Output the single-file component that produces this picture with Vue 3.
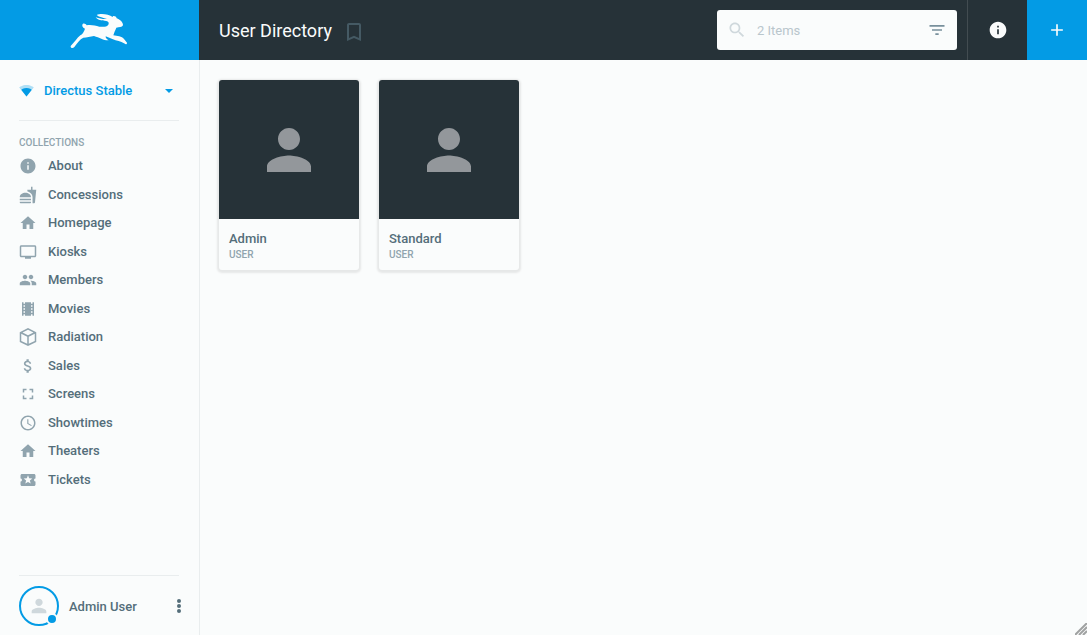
<script setup>
const paths = {
  info: 'M12 2C6.48 2 2 6.48 2 12s4.48 10 10 10 10-4.48 10-10S17.52 2 12 2zm1 15h-2v-6h2v6zm0-8h-2V7h2v2z',
  food: 'M18.06 22.99h1.66c.84 0 1.53-.64 1.63-1.46L23 5.05h-5V1h-1.97v4.05h-4.97l.3 2.34c1.71.47 3.31 1.32 4.27 2.26 1.44 1.42 2.43 2.89 2.43 5.29v8.05zM1 21.99V21h15.03v.99c0 .55-.45 1-1.01 1H2.01c-.56 0-1.01-.45-1.01-1zm15.03-7c0-8-15.03-8-15.03 0h15.03zM1.02 17h15v2h-15z',
  home: 'M10 20v-6h4v6h5v-8h3L12 3 2 12h3v8z',
  tv: 'M21 3H3c-1.1 0-2 .9-2 2v12c0 1.1.9 2 2 2h5v2h8v-2h5c1.1 0 1.99-.9 1.99-2L23 5c0-1.1-.9-2-2-2zm0 14H3V5h18v12z',
  people: 'M16 11c1.66 0 2.99-1.34 2.99-3S17.66 5 16 5c-1.66 0-3 1.34-3 3s1.34 3 3 3zm-8 0c1.66 0 2.99-1.34 2.99-3S9.66 5 8 5C6.34 5 5 6.34 5 8s1.34 3 3 3zm0 2c-2.33 0-7 1.17-7 3.5V19h14v-2.5c0-2.33-4.67-3.5-7-3.5zm8 0c-.29 0-.62.02-.97.05 1.16.84 1.97 1.97 1.97 3.45V19h6v-2.5c0-2.33-4.67-3.5-7-3.5z',
  film: 'M18 3v2h-2V3H8v2H6V3H4v18h2v-2h2v2h8v-2h2v2h2V3h-2zM8 17H6v-2h2v2zm0-4H6v-2h2v2zm0-4H6V7h2v2zm10 8h-2v-2h2v2zm0-4h-2v-2h2v2zm0-4h-2V7h2v2z',
  box: 'M12 0L1 5.5v13L12 24l11-5.500v-13L12 0zM12 2.400L19.300 6 12 9.700 4.700 6 12 2.400zM3 7.700L11 11.700V21.100L3 17.200V7.700zM13 21.100V11.700L21 7.700V17.200L13 21.100z',
  money: 'M11.8 10.9c-2.27-.59-3-1.2-3-2.15 0-1.09 1.01-1.85 2.7-1.85 1.78 0 2.44.85 2.5 2.1h2.21c-.07-1.72-1.12-3.3-3.21-3.81V3h-3v2.16c-1.94.42-3.5 1.68-3.5 3.61 0 2.31 1.91 3.46 4.7 4.13 2.5.6 3 1.48 3 2.41 0 .69-.49 1.79-2.7 1.79-2.06 0-2.87-.92-2.98-2.1h-2.2c.12 2.19 1.76 3.42 3.68 3.83V21h3v-2.15c1.95-.37 3.5-1.5 3.5-3.55 0-2.84-2.43-3.81-4.7-4.4z',
  screen: 'M7 14H5v5h5v-2H7v-3zm-2-4h2V7h3V5H5v5zm12 7h-3v2h5v-5h-2v3zM14 5v2h3v3h2V5h-5z',
  clock: 'M11.99 2C6.47 2 2 6.48 2 12s4.47 10 9.99 10C17.52 22 22 17.52 22 12S17.52 2 11.99 2zM12 20c-4.42 0-8-3.58-8-8s3.58-8 8-8 8 3.58 8 8-3.58 8-8 8zm.5-13H11v6l5.25 3.15.75-1.23-4.5-2.67z',
  ticket: 'M20 12c0-1.1.9-2 2-2V6c0-1.1-.9-2-2-2H4c-1.1 0-1.99.9-1.99 2v4c1.1 0 1.99.9 1.99 2s-.89 2-2 2v4c0 1.1.9 2 2 2h16c1.1 0 2-.9 2-2v-4c-1.1 0-2-.9-2-2zm-4.42 4.8L12 14.5l-3.58 2.3 1.08-4.12-3.29-2.69 4.24-.25L12 5.8l1.54 3.95 4.24.25-3.29 2.69 1.09 4.11z',
  person: 'M12 12c2.21 0 4-1.79 4-4s-1.79-4-4-4-4 1.79-4 4 1.79 4 4 4zm0 2c-2.67 0-8 1.34-8 4v2h16v-2c0-2.66-5.33-4-8-4z',
}

const collections = [
  { name: 'About', icon: paths.info },
  { name: 'Concessions', icon: paths.food },
  { name: 'Homepage', icon: paths.home },
  { name: 'Kiosks', icon: paths.tv },
  { name: 'Members', icon: paths.people },
  { name: 'Movies', icon: paths.film },
  { name: 'Radiation', icon: paths.box },
  { name: 'Sales', icon: paths.money },
  { name: 'Screens', icon: paths.screen },
  { name: 'Showtimes', icon: paths.clock },
  { name: 'Theaters', icon: paths.home },
  { name: 'Tickets', icon: paths.ticket },
]

const users = [
  { name: 'Admin', role: 'User' },
  { name: 'Standard', role: 'User' },
]
</script>

<template>
  <div class="app">
    <aside class="sidebar">
      <a class="logo" href="#" aria-label="Directus">
        <svg viewBox="0 0 240 180" width="80" height="60" aria-hidden="true">
          <path d="M67 74C69 68 77 70 80 76C92 73 106 77 118 80C130 81 141 81 145 74C148 68 145 65 139 63C125 63 111 59 107 52C119 56 130 58 141 57C131 53 117 52 110 45C121 40 146 42 158 51C158 46 169 48 170 55C180 58 190 68 189 76C186 82 177 82 169 83C165 92 162 99 160 106C171 109 186 108 192 117L201 128C202 133 196 134 192 130C183 123 170 123 157 117L137 109C136 114 141 118 146 121C132 122 119 113 102 108C91 110 80 113 70 113C59 118 53 128 43 141C39 146 31 145 32 138C42 129 51 114 61 106C69 102 72 94 75 86C69 83 66 79 67 74Z" />
        </svg>
      </a>

      <div class="side-body">
        <button class="project" type="button">
          <svg class="signal" viewBox="0 0 24 24" aria-hidden="true">
            <path opacity=".3" d="M12.01 21.49L23.64 7c-.45-.34-4.93-4-11.64-4C5.28 3 .81 6.66.36 7l11.63 14.49.01.01.01-.01z" />
            <path d="M3.53 10.95l8.46 10.54.01.01.01-.01 8.46-10.54C20.04 10.62 16.81 8 12 8c-4.81 0-8.04 2.62-8.47 2.95z" />
          </svg>
          <span>Directus Stable</span>
          <svg class="caret" viewBox="0 0 8 4" aria-hidden="true"><path d="M0 0h8L4 4z" /></svg>
        </button>

        <nav class="nav" aria-labelledby="collections-title">
          <h2 id="collections-title">Collections</h2>
          <ul>
            <li v-for="item in collections" :key="item.name">
              <a href="#">
                <svg viewBox="0 0 24 24" aria-hidden="true"><path :d="item.icon" /></svg>
                <span>{{ item.name }}</span>
              </a>
            </li>
          </ul>
        </nav>

        <footer class="account">
          <span class="avatar">
            <svg viewBox="0 0 24 24" aria-hidden="true"><path :d="paths.person" /></svg>
            <i class="status"></i>
          </span>
          <span class="account-name">Admin User</span>
          <button class="more" type="button" aria-label="More options">
            <svg viewBox="0 0 4 14" aria-hidden="true">
              <circle cx="2" cy="2" r="2" /><circle cx="2" cy="7" r="2" /><circle cx="2" cy="12" r="2" />
            </svg>
          </button>
        </footer>
      </div>
    </aside>

    <div class="content">
      <header class="header">
        <h1>User Directory</h1>
        <button class="bookmark" type="button" aria-label="Bookmark">
          <svg viewBox="0 0 24 24" aria-hidden="true"><path d="M17 3H7c-1.1 0-1.99.9-1.99 2L5 21l7-3 7 3V5c0-1.1-.9-2-2-2zm0 15l-5-2.18L7 18V5h10v13z" /></svg>
        </button>
        <div class="search">
          <label for="search-input" aria-label="Search items">
            <svg viewBox="0 0 24 24" aria-hidden="true"><path d="M15.5 14h-.79l-.28-.27C15.41 12.59 16 11.11 16 9.5 16 5.91 13.09 3 9.5 3S3 5.91 3 9.5 5.91 16 9.5 16c1.61 0 3.09-.59 4.23-1.57l.27.28v.79l5 4.99L20.49 19l-4.99-5zm-6 0C7.01 14 5 11.99 5 9.5S7.01 5 9.5 5 14 7.01 14 9.5 11.99 14 9.5 14z" /></svg>
          </label>
          <input id="search-input" type="text" placeholder="2 Items" />
          <button type="button" class="filter" aria-label="Filter">
            <svg viewBox="0 0 24 24" aria-hidden="true"><path d="M10 18h4v-2h-4v2zM3 6v2h18V6H3zm3 7h12v-2H6v2z" /></svg>
          </button>
        </div>
        <button class="square details" type="button" aria-label="Information">
          <svg viewBox="0 0 24 24" aria-hidden="true"><path :d="paths.info" /></svg>
        </button>
        <button class="square add" type="button" aria-label="Add user">
          <svg viewBox="0 0 24 24" aria-hidden="true"><path d="M19 13h-6v6h-2v-6H5v-2h6V5h2v6h6v2z" /></svg>
        </button>
      </header>

      <main class="cards">
        <a v-for="user in users" :key="user.name" class="card" href="#">
          <span class="picture">
            <svg viewBox="0 0 24 24" aria-hidden="true"><path :d="paths.person" /></svg>
          </span>
          <span class="caption">
            <span class="name">{{ user.name }}</span>
            <span class="role">{{ user.role }}</span>
          </span>
        </a>
      </main>
      <svg class="grip" viewBox="0 0 12 12" aria-hidden="true"><path d="M0 12L12 0M4 12L12 4M8 12L12 8" /></svg>
    </div>
  </div>
</template>

<style>
body {
  background: #fafcfc;
}
</style>

<style scoped>
* {
  box-sizing: border-box;
}

.app {
  display: grid;
  grid-template-columns: 199px 1fr;
  min-height: 100vh;
  background: #fafcfc;
  color: #546e7a;
  font: 500 13px/16px Roboto, "Liberation Sans", sans-serif;
}

svg {
  display: block;
  fill: currentColor;
}

a {
  color: inherit;
  text-decoration: none;
}

button {
  padding: 0;
  border: 0;
  background: none;
  color: inherit;
  font: inherit;
  cursor: pointer;
}

.sidebar {
  display: flex;
  flex-direction: column;
}

.logo {
  display: flex;
  justify-content: center;
  height: 60px;
  background: #039be5;
  color: #fafcfc;
}

.side-body {
  display: flex;
  flex: 1;
  flex-direction: column;
  padding: 0 20px 0 19px;
}

.project {
  display: flex;
  align-items: center;
  height: 61px;
  padding: 1px 6px 0 0;
  border-bottom: 1px solid #e9edee;
  color: #039be5;
}

.signal {
  width: 15px;
  margin-right: 10px;
}

.caret {
  width: 8px;
  margin-left: auto;
}

.nav h2 {
  margin: 14px 0 0;
  color: #90a4ae;
  font-size: 10px;
  font-weight: 500;
  line-height: 16px;
  text-transform: uppercase;
}

.nav ul {
  display: grid;
  grid-auto-rows: 1fr;
  min-height: 342px;
  margin: 1px 0 0;
  padding: 0;
  list-style: none;
}

.nav a {
  display: flex;
  align-items: center;
  gap: 11px;
  height: 100%;
}

.nav svg {
  width: 18px;
  color: #90a4ae;
}

.account {
  display: flex;
  align-items: center;
  gap: 10px;
  height: 60px;
  margin-top: auto;
  border-top: 1px solid #e9edee;
}

.account-name {
  padding-top: 2px;
}

.avatar {
  position: relative;
  display: grid;
  place-items: center;
  width: 40px;
  height: 40px;
  border: 2px solid #039be5;
  border-radius: 50%;
}

.avatar svg {
  width: 22px;
  color: #cfd8dc;
}

.status {
  position: absolute;
  right: -1px;
  bottom: -1px;
  width: 12px;
  height: 12px;
  border: 2px solid #fafcfc;
  border-radius: 50%;
  background: #039be5;
}

.more {
  width: 4px;
  margin: 0 -2px 0 auto;
}

.content {
  position: relative;
  display: flex;
  flex-direction: column;
  min-width: 0;
}

.header {
  display: flex;
  align-items: center;
  height: 60px;
  padding-left: 20px;
  background: #263238;
  color: #fafcfc;
}

.header h1 {
  margin: 0;
  padding-top: 2px;
  font-size: 18px;
  font-weight: 400;
  line-height: 24px;
}

.bookmark {
  margin-left: 10px;
  padding-top: 4px;
  color: #455a64;
}

.bookmark svg {
  width: 24px;
}

.search {
  display: flex;
  align-items: center;
  width: 240px;
  height: 40px;
  margin: 0 10px 0 auto;
  padding: 0 10px;
  border-radius: 3px;
  background: #fafcfc;
}

.search label svg {
  width: 20px;
  color: #cfd8dc;
}

.search input {
  flex: 1;
  min-width: 0;
  height: 40px;
  padding: 0 10px;
  border: 0;
  outline: 0;
  background: none;
  color: #546e7a;
  font: inherit;
  font-weight: 400;
}

.search input::placeholder {
  color: #b9c6cc;
  opacity: 1;
}

.filter {
  color: #78909c;
}

.filter svg {
  width: 20px;
}

.square {
  display: grid;
  place-items: center;
  width: 60px;
  height: 60px;
}

.square svg {
  width: 20px;
}

.details {
  border-left: 1px solid #424c51;
}

.add {
  background: #039be5;
}

.cards {
  display: grid;
  flex: 1;
  grid-template-columns: repeat(auto-fill, 140px);
  align-content: start;
  gap: 20px;
  padding: 20px 20px 20px 19px;
  border-left: 1px solid #e9edee;
}

.card {
  overflow: hidden;
  border-radius: 3px;
  background: #fafcfc;
  box-shadow: 0 1px 2px 2px #e6e8e8;
}

.picture {
  display: grid;
  place-items: center;
  height: 139px;
  background: #263238;
  color: #93979b;
}

.picture svg {
  width: 66px;
}

.caption {
  display: flex;
  flex-direction: column;
  padding: 12px 10px 7px;
}

.role {
  color: #90a4ae;
  font-size: 10px;
  text-transform: uppercase;
}

.grip {
  position: absolute;
  right: 0;
  bottom: 0;
  width: 12px;
  fill: none;
  stroke: #a0a2a2;
  stroke-width: 2;
}
</style>
